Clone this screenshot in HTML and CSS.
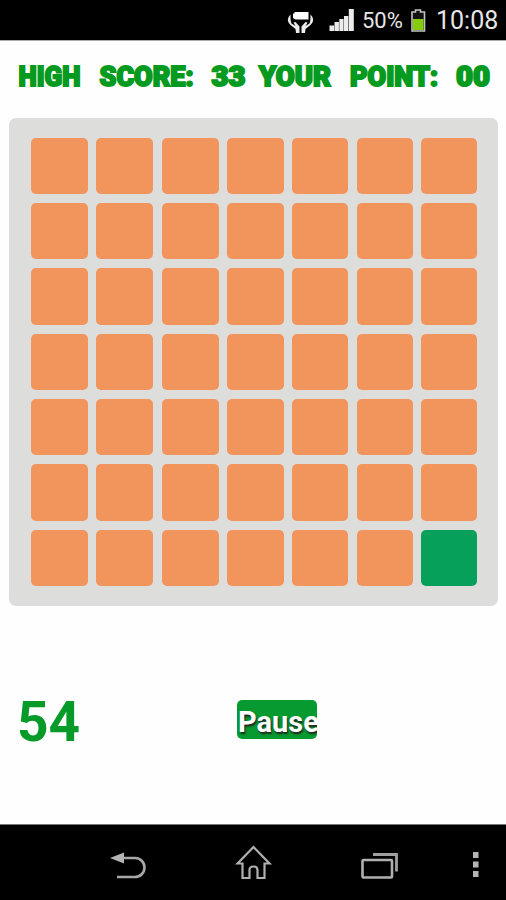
FILE: index.html
```html
<!DOCTYPE html>
<html lang="en">
<head>
    <meta charset="UTF-8">
    <meta name="viewport" content="width=device-width, initial-scale=1.0">
    <title>Tile Game</title>
    <link rel="stylesheet" href="styles.css">
</head>
<body>
    <div class="screen">
        <div class="status-bar">
            <svg class="care-icon" width="28" height="24" viewBox="0 0 28 24">
                <path d="M6 3.500h1.500V2h14v7.500h-13L6 8z" fill="#fff"/>
                <path d="M3.500 4.500C-.5 9 .5 12 3.500 15l5 4 .5 4h3.500v-6.500l-4-4.500-2 .5 2 3.500-4-2.500c-1-2-1-5-1-9z" fill="#ececec"/>
                <path d="M23.500 4.500c4 4.500 3 7.500 0 10.500l-5 4-.5 4h-3.500v-6.500l4-4.500 2 .5-2 3.500 4-2.500c1-2 1-5 1-9z" fill="#ececec"/>
            </svg>
            <svg class="signal-icon" width="26" height="24" viewBox="0 0 26 24">
                <path d="M.5 17.500h4.600V23H.5zM5.500 14h4.400v9H5.500zM10.300 11h4.300v12h-4.300zM15 8h4.300v15H15zM19.800 1h5v22h-5z" fill="#ececec"/>
            </svg>
            <span class="battery-level">50%</span>
            <svg class="battery-icon" width="17" height="25" viewBox="0 0 17 25">
                <path d="M2 4h3.500V2h5v2H14.500v19H2z" fill="#111" stroke="#c4c4c4" stroke-width="1.600"/>
                <path d="M3 11h10.500v11H3z" fill="#86cc0c"/>
            </svg>
            <span class="clock">10:08</span>
        </div>

        <header>
            <svg class="scores" width="506" height="40" viewBox="0 0 506 40">
                <text x="18.500" y="31" textLength="62" lengthAdjust="spacingAndGlyphs">HIGH</text>
                <text x="99.500" y="31" textLength="94" lengthAdjust="spacingAndGlyphs">SCORE:</text>
                <text x="211.500" y="31" textLength="34" lengthAdjust="spacingAndGlyphs">33</text>
                <text x="259" y="31" textLength="72" lengthAdjust="spacingAndGlyphs">YOUR</text>
                <text x="350" y="31" textLength="88" lengthAdjust="spacingAndGlyphs">POINT:</text>
                <text x="456" y="31" textLength="34" lengthAdjust="spacingAndGlyphs">00</text>
            </svg>
        </header>

        <div class="board">
            <div class="tile"></div><div class="tile"></div><div class="tile"></div><div class="tile"></div><div class="tile"></div><div class="tile"></div><div class="tile"></div>
            <div class="tile"></div><div class="tile"></div><div class="tile"></div><div class="tile"></div><div class="tile"></div><div class="tile"></div><div class="tile"></div>
            <div class="tile"></div><div class="tile"></div><div class="tile"></div><div class="tile"></div><div class="tile"></div><div class="tile"></div><div class="tile"></div>
            <div class="tile"></div><div class="tile"></div><div class="tile"></div><div class="tile"></div><div class="tile"></div><div class="tile"></div><div class="tile"></div>
            <div class="tile"></div><div class="tile"></div><div class="tile"></div><div class="tile"></div><div class="tile"></div><div class="tile"></div><div class="tile"></div>
            <div class="tile"></div><div class="tile"></div><div class="tile"></div><div class="tile"></div><div class="tile"></div><div class="tile"></div><div class="tile"></div>
            <div class="tile"></div><div class="tile"></div><div class="tile"></div><div class="tile"></div><div class="tile"></div><div class="tile"></div><div class="tile active"></div>
        </div>

        <div class="controls">
            <span class="timer">54</span>
            <button class="pause-btn">Pause</button>
        </div>

        <nav class="nav-bar">
            <svg class="back" width="38" height="30" viewBox="0 0 38 30">
                <path d="M12 7h13a9.500 9.500 0 0 1 0 19H7" fill="none" stroke="#a8a8a8" stroke-width="2.600"/>
                <path d="M0 7l14-5.500v11z" fill="#b4b4b4"/>
            </svg>
            <svg class="home" width="38" height="36" viewBox="0 0 38 36">
                <path d="M18.500 2L2.500 18.500H7.500v14.500h7V25q0-3.500 4-3.500t4 3.500v8h7V18.500h5z" fill="none" stroke="#b0b0b0" stroke-width="2.200"/>
            </svg>
            <svg class="recent" width="38" height="28" viewBox="0 0 38 28">
                <path d="M12 2.500h23.500V19.500" fill="none" stroke="#a0a0a0" stroke-width="2.800"/>
                <rect x="1.500" y="8" width="29.500" height="17.500" rx="1" fill="none" stroke="#b0b0b0" stroke-width="2.600"/>
            </svg>
            <svg class="more" width="8" height="28" viewBox="0 0 8 28">
                <path d="M1 1h5.500v6H1zM1 10.500h5.500v6H1zM1 20h5.500v6H1z" fill="#b4b4b4"/>
            </svg>
        </nav>
    </div>
</body>
</html>
```

FILE: styles.css
```css
body {
    margin: 0;
    font-family: Roboto, sans-serif;
    background: #fefefe;
}
.screen {
    width: 506px;
    height: 900px;
    display: flex;
    flex-direction: column;
    overflow: hidden;
}
svg {
    display: block;
    flex: none;
}
.status-bar {
    box-sizing: border-box;
    height: 41px;
    background: #000;
    border-bottom: 1px solid #aaa;
    display: flex;
    align-items: center;
    padding-left: 287px;
    color: #e6e6e6;
    line-height: 40px;
    white-space: nowrap;
}
.care-icon {
    margin-top: 3px;
}
.signal-icon {
    margin-left: 14px;
}
.battery-level {
    width: 47px;
    padding-left: 7px;
    font-size: 22px;
    height: 38px;
}
.battery-icon {
    margin-left: 1px;
}
.clock {
    margin-left: 9px;
    font-size: 25px;
    height: 38px;
}
.scores {
    margin-top: 14px;
}
.scores text {
    font-size: 28px;
    font-weight: 900;
    fill: #069a20;
    stroke: #069a20;
    stroke-width: 2px;
    stroke-linejoin: miter;
}
.board {
    box-sizing: border-box;
    width: 489px;
    height: 488px;
    margin: 23px 0 0 9px;
    padding: 19.5px 0 0 22px;
    background: #dddddc;
    border-radius: 7px;
    display: grid;
    grid-template-columns: repeat(4, 57px) repeat(3, 56.2px);
    grid-auto-rows: 56.6px;
    gap: 8.75px 8.3px;
    align-content: start;
}
.tile {
    background: #f1955c;
    border-radius: 5px;
}
.tile.active {
    background: #07a05b;
}
.controls {
    flex: 1;
    display: flex;
    align-items: flex-start;
    padding-left: 17px;
}
.timer {
    width: 220px;
    margin-top: 84px;
    font-size: 55px;
    line-height: 64px;
    font-weight: 700;
    color: #069a28;
}
.pause-btn {
    width: 80px;
    height: 39px;
    margin-top: 94px;
    padding: 4px 0 0 1px;
    border: none;
    border-radius: 5px;
    background: #069a30;
    color: #fff;
    font-family: inherit;
    font-size: 29px;
    font-weight: 700;
    line-height: 36px;
    text-align: left;
    text-shadow: 1px 2px 2px #222;
    overflow: hidden;
}
.nav-bar {
    box-sizing: border-box;
    height: 76px;
    background: #000;
    border-top: 1px solid #777;
    display: flex;
    align-items: flex-start;
    padding-left: 110px;
}
.back {
    margin-top: 26px;
}
.home {
    margin: 20px 0 0 87px;
}
.recent {
    margin: 27px 0 0 88px;
}
.more {
    margin: 26px 0 0 73px;
}
```
